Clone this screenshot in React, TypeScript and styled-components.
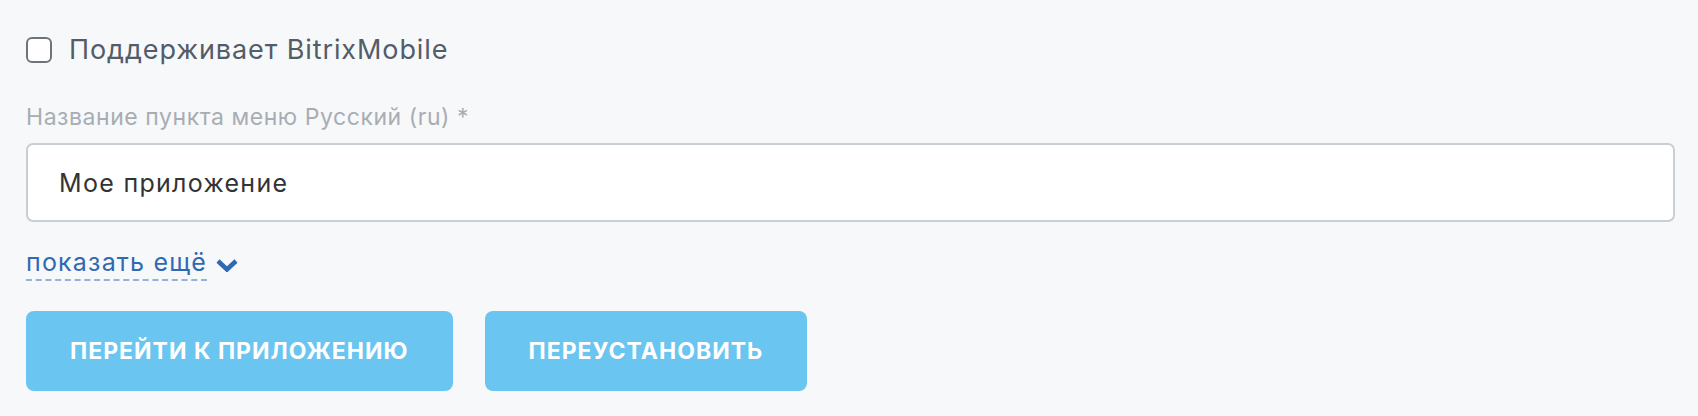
import React from 'react';
import styled, { createGlobalStyle } from 'styled-components';

const GlobalStyle = createGlobalStyle`
    html, body {
        margin: 0;
        padding: 0;
        background: #f7f8fa;
    }
    body {
        font-family: Inter, "Noto Sans", "Liberation Sans", sans-serif;
        -webkit-font-smoothing: antialiased;
    }
`;

const Page = styled.div`
    display: flex;
    flex-direction: column;
    align-items: flex-start;
    padding: 37px 23px 25px 26px;
`;

const CheckRow = styled.label`
    display: flex;
    align-items: center;
    gap: 17px;
    height: 26px;
    cursor: pointer;
`;

const CheckBox = styled.input.attrs({ type: 'checkbox' })`
    appearance: none;
    margin: 0;
    width: 26px;
    height: 26px;
    box-sizing: border-box;
    border: 2px solid #6f747b;
    border-radius: 6px;
    background: #fff;
`;

const CheckText = styled.span`
    font-size: 27px;
    line-height: 28px;
    letter-spacing: 0.9px;
    color: #535c69;
`;

const FieldLabel = styled.div`
    margin-top: 40px;
    font-size: 23px;
    line-height: 28px;
    letter-spacing: 0.55px;
    color: #a8adb4;
`;

const TextInput = styled.input`
    margin-top: 12px;
    width: 100%;
    height: 79px;
    box-sizing: border-box;
    padding: 0 31px;
    border: 2px solid #c9ced5;
    border-radius: 7px;
    background: #fff;
    font-family: inherit;
    font-size: 25px;
    letter-spacing: 1.3px;
    color: #333;
    outline: none;
`;

const MoreLink = styled.a`
    margin-top: 26px;
    display: inline-flex;
    align-items: center;
    gap: 9px;
    font-size: 25px;
    line-height: 28px;
    letter-spacing: 1.2px;
    color: #2f68b3;
    text-decoration: none;
    cursor: pointer;
`;

const MoreText = styled.span`
    padding-bottom: 3px;
    border-bottom: 2px dashed #94b2dc;
`;

const Buttons = styled.div`
    margin-top: 30px;
    display: flex;
    gap: 32px;
`;

const Button = styled.button`
    height: 80px;
    padding: 0 44px;
    border: none;
    border-radius: 8px;
    background: #6ac5f0;
    color: #fff;
    font-family: inherit;
    font-size: 23px;
    font-weight: 700;
    letter-spacing: 1px;
    text-transform: uppercase;
    cursor: pointer;
`;

const Chevron = () => (
    <svg width="22" height="14" viewBox="0 0 22 14" fill="none">
        <polyline points="2,3 11,11.5 20,3" stroke="#2f68b3" strokeWidth="4.5" strokeLinejoin="miter" />
    </svg>
);

export default function App() {
    return (
        <>
            <GlobalStyle />
            <Page>
                <CheckRow>
                    <CheckBox />
                    <CheckText>Поддерживает BitrixMobile</CheckText>
                </CheckRow>
                <FieldLabel>Название пункта меню Русский (ru) *</FieldLabel>
                <TextInput defaultValue="Мое приложение" />
                <MoreLink>
                    <MoreText>показать ещё</MoreText>
                    <Chevron />
                </MoreLink>
                <Buttons>
                    <Button>Перейти к приложению</Button>
                    <Button>Переустановить</Button>
                </Buttons>
            </Page>
        </>
    );
}
